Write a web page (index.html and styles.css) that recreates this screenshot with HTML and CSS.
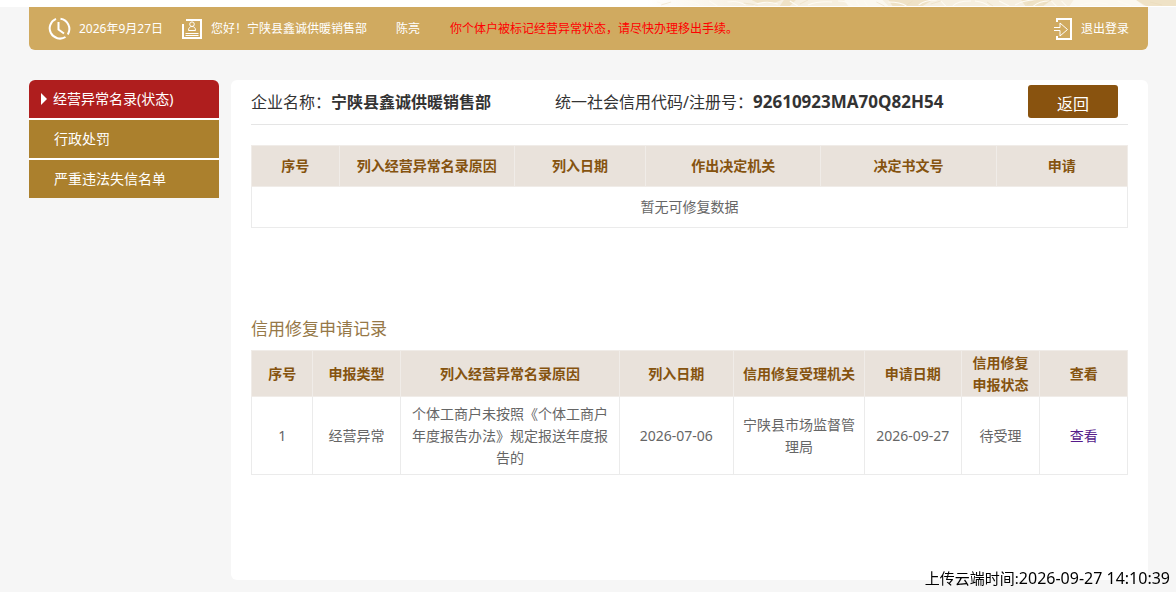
FILE: index.html
```html
<!DOCTYPE html>
<html lang="zh-CN">
<head>
<meta charset="utf-8">
<title>信用修复</title>
<link rel="stylesheet" href="styles.css">
</head>
<body>
<div class="banner">
  <svg class="banner-art" viewBox="0 0 526 7" preserveAspectRatio="xMaxYMin slice" aria-hidden="true">
    <defs>
      <linearGradient id="fade"><stop offset="0" stop-color="#f6efe0" stop-opacity="0"/><stop offset=".2" stop-color="#f6efe0"/><stop offset="1" stop-color="#f6efe0"/></linearGradient>
    </defs>
    <path d="M0 0H526V6H0Z" fill="url(#fade)"/>
    <path d="M104 0h30l-8 3h-16zM132 6l4-6h12l-6 6zM240 0h44l-10 6h-30zM372 0h30l-8 6h-18zM486 0h40v6h-30z" fill="#efe2c6"/>
    <path d="M424 0h62l8 6h-74zM196 0h38l6 6h-40z" fill="#fbf8f0"/>
    <path d="M10 2l12 3M34 1q12 0 18 4M62 1l8 5M80 2q10-2 18 3M106 5q12-5 24-1M142 1l8 5M160 5q10-4 24-3M190 1q10 0 14 5M208 1l3 5M216 1l3 5M240 2q12 0 18 4M270 5q6-5 18-5M292 1l5 5M304 6q4-5 18-5M326 1q9 1 14 5M350 1l10 5M366 5q8-5 20-5M384 6q6-5 16-5M402 1l5 5M412 1l5 5M430 5q14-4 28-1M468 1l14 5" fill="none" stroke="#fdfaf3"/>
    <path d="M14 5l10-3M96 3l14 2M152 4l8-4M228 2l8 4M258 5l6-4M282 4l10-3M338 2l6 4M378 4l8-4M394 4l8-4M500 2l12 3" fill="none" stroke="#e9d9b8" stroke-width=".5"/>
  </svg>
</div>
<div class="page">
  <header class="topbar">
    <svg class="icon icon-clock" viewBox="0 0 24 24" aria-hidden="true"><path d="M9 1.800A10.300 10.300 0 1 0 18.500 20M20.800 17.400A10.300 10.300 0 0 0 13.500 1.800M11.500 5v7.500l5.500 4"/></svg>
    <span class="date">2026年9月27日</span>
    <svg class="icon icon-user" viewBox="0 0 22 22" aria-hidden="true"><path d="M5 2h15v18H2V6"/><path class="thin" d="M4.500 15.500h13M4.500 17.500h13M7.500 12.500c0-3 1.500-4 3.500-4s3.500 1 3.500 4zM11 8.500a2.300 2.300 0 1 1 0-4.600 2.300 2.300 0 0 1 0 4.600z"/></svg>
    <span class="company">您好！宁陕县鑫诚供暖销售部</span>
    <span class="person">陈亮</span>
    <span class="notice">你个体户被标记经营异常状态，请尽快办理移出手续。</span>
    <a class="logout" href="#">
      <svg class="icon icon-exit" viewBox="0 0 20 24" aria-hidden="true"><path d="M4 5V2h14v20H4v-3"/><path class="thin" d="M1 10.500h6V6l7.500 6.500L7 19v-5.500H1"/></svg>
      <span>退出登录</span>
    </a>
  </header>
  <div class="columns">
    <nav class="menu">
      <a class="menu-item active" href="#">经营异常名录(状态)</a>
      <a class="menu-item" href="#">行政处罚</a>
      <a class="menu-item" href="#">严重违法失信名单</a>
    </nav>
    <main class="panel">
      <div class="summary">
        <div class="field field-name">企业名称：<b>宁陕县鑫诚供暖销售部</b></div>
        <div class="field">统一社会信用代码/注册号：<b class="code">92610923MA70Q82H54</b></div>
        <button class="back" type="button">返回</button>
      </div>
      <table class="grid pending">
        <colgroup><col class="w10"><col class="w20"><col class="w15"><col class="w20"><col class="w20"><col class="w15"></colgroup>
        <thead><tr><th>序号</th><th>列入经营异常名录原因</th><th>列入日期</th><th>作出决定机关</th><th>决定书文号</th><th>申请</th></tr></thead>
        <tbody><tr><td colspan="6">暂无可修复数据</td></tr></tbody>
      </table>
      <h2 class="title">信用修复申请记录</h2>
      <table class="grid records">
        <colgroup><col class="w7"><col class="w10"><col class="w25"><col class="w13"><col class="w15"><col class="w11"><col class="w9"><col class="w10"></colgroup>
        <thead><tr><th>序号</th><th>申报类型</th><th>列入经营异常名录原因</th><th>列入日期</th><th>信用修复受理机关</th><th>申请日期</th><th>信用修复申报状态</th><th>查看</th></tr></thead>
        <tbody><tr><td>1</td><td>经营异常</td><td>个体工商户未按照《个体工商户年度报告办法》规定报送年度报告的</td><td>2026-07-06</td><td>宁陕县市场监督管理局</td><td>2026-09-27</td><td>待受理</td><td><a class="view" href="#">查看</a></td></tr></tbody>
      </table>
    </main>
  </div>
</div>
<div class="stamp">上传云端时间:<time class="stamp-time">2026-09-27 14:10:39</time></div>
</body>
</html>
```
FILE: styles.css
```css
* { box-sizing: border-box; }
body {
  margin: 0;
  background: #f6f6f6;
  color: #666;
  font: 14px/22px "Noto Sans", "Noto Sans CJK SC", sans-serif;
}
.banner { height: 7px; background: #fff; display: flex; justify-content: flex-end; }
.banner-art { width: 45%; height: 7px; }
.page { padding: 0 28px 12px 29px; }
.topbar {
  display: flex;
  align-items: center;
  height: 43px;
  padding: 0 19px 0 18px;
  border-radius: 0 0 6px 6px;
  background: #d0aa60;
  color: #fff;
  font-size: 12px;
}
.icon { flex: none; fill: none; stroke: #fff; stroke-width: 2; }
.thin { stroke-width: 1; }
.icon-clock { width: 24px; height: 24px; margin-right: 8px; }
.icon-user { width: 22px; height: 22px; margin: 0 8px 0 18px; }
.icon-exit { width: 20px; height: 24px; margin-right: 8px; }
.person { margin-left: 29px; }
.notice { margin-left: 30px; color: #f00; }
.logout { display: flex; align-items: center; margin-left: auto; color: #fff; text-decoration: none; }
.columns { display: flex; align-items: flex-start; gap: 12px; margin-top: 30px; }
.menu {
  flex: none;
  display: grid;
  gap: 2px;
  width: 190px;
  border-radius: 6px 6px 0 0;
  overflow: hidden;
  background: #fff;
}
.menu-item {
  display: flex;
  align-items: center;
  height: 38px;
  padding-left: 25px;
  background: #ab802d;
  color: #fff;
  text-decoration: none;
}
.active { padding-left: 12px; background: #af1e1e; }
.active::before {
  content: "";
  margin-right: 6px;
  border-left: 6px solid #fff;
  border-top: 6px solid transparent;
  border-bottom: 6px solid transparent;
}
.panel {
  flex: 1;
  min-width: 0;
  min-height: 500px;
  padding: 0 20px;
  border-radius: 6px;
  background: #fff;
}
.summary {
  display: flex;
  align-items: center;
  height: 45px;
  padding-right: 10px;
  border-bottom: 1px solid #e5e5e5;
  color: #333;
  font-size: 16px;
}
.field-name { margin-right: 64px; }
.code { font-size: 17px; }
.back {
  align-self: flex-start;
  width: 90px;
  height: 33px;
  margin: 5px 0 0 auto;
  padding: 4px 0 0;
  border: 0;
  border-radius: 3px;
  background: #89530f;
  color: #fff;
  font: inherit;
}
.grid { width: 100%; table-layout: fixed; border-collapse: collapse; text-align: center; }
.grid th, .grid td { padding: 0 8px; border: 1px solid #ebebeb; }
.grid th { border-color: #f0ece8; background: #e9e2db; color: #85530f; font-weight: 700; }
.pending { margin-top: 20px; }
.pending th, .pending td { height: 41px; }
.records th { height: 46px; }
.records td { height: 78px; }
.title { margin: 89px 0 9px; color: #967847; font-size: 17px; font-weight: 400; line-height: 24px; }
.w7 { width: 7%; }
.w9 { width: 9%; }
.w10 { width: 10%; }
.w11 { width: 11%; }
.w13 { width: 13%; }
.w15 { width: 15%; }
.w20 { width: 20%; }
.w25 { width: 25%; }
.view { color: #551a8b; text-decoration: none; }
.stamp {
  position: fixed;
  right: 6px;
  bottom: 3px;
  color: #000;
  font-size: 15px;
}
.stamp-time { font-size: 16px; }
```
